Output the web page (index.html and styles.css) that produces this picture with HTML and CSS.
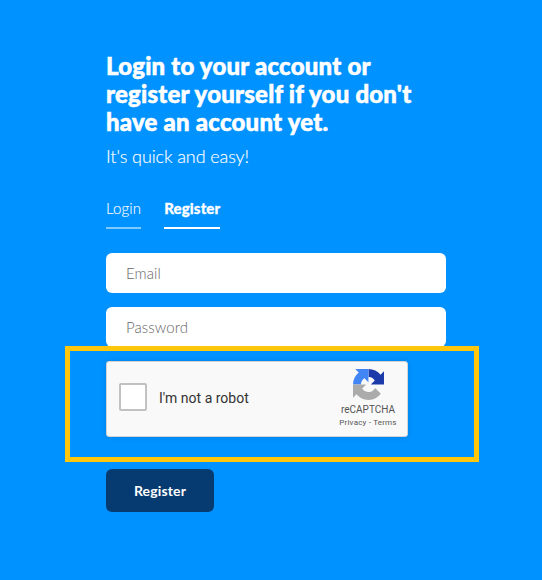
FILE: index.html
```html
<!DOCTYPE html>
<html lang="en">
<head>
<meta charset="utf-8">
<title>Register</title>
<link rel="stylesheet" href="styles.css">
</head>
<body>
<main class="account">
  <h1 class="title"><span>Login to your account or</span><br><span>register yourself if you don't</span><br><span>have an account yet.</span></h1>
  <p class="subtitle">It's quick and easy!</p>
  <nav class="tabs">
    <a class="tab">Login</a>
    <a class="tab tab-active">Register</a>
  </nav>
  <form class="form">
    <input class="field" type="email" placeholder="Email">
    <input class="field" type="password" placeholder="Password">
    <div class="highlight">
      <div class="captcha">
        <span class="checkbox"></span>
        <span class="captcha-label">I'm not a robot</span>
        <div class="brand">
          <svg class="logo" viewBox="0 0 64 64">
            <path fill="#1C3AA9" d="M64 31.955l-.033-1.37V4.687l-7.16 7.16C50.948 4.674 42.033.093 32.05.093v16.26c.485 0 .86.057 1.135.163 4.976.393 9.288 3.14 11.828 7.124l-8.307 8.307L64 31.953"/>
            <path fill="#4285F4" d="M31.862.094l-1.37.033H4.594l7.16 7.16C4.58 13.147 0 22.06 0 32.046h16.26c0-.485.057-.86.163-1.135.393-4.976 3.14-9.288 7.124-11.828l8.307 8.307L31.86.095"/>
            <path fill="#ABABAB" d="M.001 32.045l.033 1.37v25.898l7.16-7.16c5.86 7.173 14.774 11.754 24.76 11.754 10.4 0 19.622-4.96 25.458-12.64l-11.736-11.86a15.55 15.55 0 0 1-4.754 5.334c-2.05 1.6-4.952 2.906-8.968 2.906-.485 0-.86-.057-1.135-.163-4.976-.393-9.288-3.14-11.828-7.124l8.307-8.307c-10.522.04-22.4.066-27.295-.005"/>
          </svg>
          <span class="brand-name">reCAPTCHA</span>
          <span class="legal">Privacy - Terms</span>
        </div>
      </div>
    </div>
    <button class="submit" type="button">Register</button>
  </form>
</main>
</body>
</html>
```
FILE: styles.css
```css
* { box-sizing: border-box; }
body {
  margin: 0;
  height: 580px;
  overflow: hidden;
  background: #0092ff;
  color: #fff;
  font-family: Lato, sans-serif;
}
.account { width: 340px; margin-left: 106px; padding-top: 52px; }
.title {
  margin: 0;
  font-size: 24px;
  font-weight: 900;
  line-height: 28px;
  letter-spacing: .21px;
  -webkit-text-stroke: .55px #fff;
  white-space: nowrap;
}
.subtitle {
  margin: 7px 0 0;
  font-size: 18px;
  font-weight: 300;
  line-height: 26px;
  letter-spacing: -.1px;
  -webkit-text-stroke: .15px #fff;
}
.tabs { display: flex; gap: 23px; margin-top: 30px; }
.tab {
  height: 30px;
  border-bottom: 2px solid rgba(255, 255, 255, .5);
  font-size: 15px;
  font-weight: 300;
  line-height: 18px;
  letter-spacing: .14px;
  -webkit-text-stroke: .1px #fff;
}
.tab-active { border-color: #fff; font-weight: 900; -webkit-text-stroke: .3px #fff; }
.form { display: flex; flex-direction: column; align-items: flex-start; margin-top: 24px; }
.field {
  width: 340px;
  height: 40px;
  margin: 0 0 14px;
  padding: 0 20px;
  border: 0;
  border-radius: 6px;
  background: #fff;
  font: 300 15px Lato, sans-serif;
  letter-spacing: .08px;
}
.field::placeholder { color: #666; opacity: 1; }
.highlight {
  position: relative;
  width: 414px;
  height: 116px;
  margin: -15px 0 7px -41px;
  padding: 10px 0 0 36px;
  border: 5px solid #ffc60b;
}
.captcha {
  display: flex;
  align-items: center;
  width: 302px;
  height: 76px;
  padding-left: 12px;
  border: 1px solid #d3d3d3;
  border-radius: 3px;
  background: #f9f9f9;
  box-shadow: 0 0 4px 1px rgba(0, 0, 0, .08);
  color: #000;
  font-family: Roboto, sans-serif;
}
.checkbox {
  width: 28px;
  height: 28px;
  margin-top: -4px;
  border: 2px solid #c1c1c1;
  border-radius: 2px;
  background: #fff;
}
.captcha-label { margin: -1px 0 0 12px; font-size: 14px; line-height: 17px; color: #333; }
.brand {
  display: flex;
  flex-direction: column;
  align-items: center;
  align-self: flex-start;
  width: 70px;
  margin: 7px 4px 0 auto;
  color: #555;
}
.logo { width: 31px; height: 31px; }
.brand-name { margin-top: 4px; font-size: 10px; line-height: 12px; }
.legal { margin-top: 1px; font-size: 8px; line-height: 12px; letter-spacing: .2px; }
.submit {
  width: 108px;
  height: 43px;
  padding: 0;
  border: 0;
  border-radius: 6px;
  background: #053b70;
  color: #fff;
  font: 700 14px Lato, sans-serif;
  letter-spacing: .15px;
}
```
